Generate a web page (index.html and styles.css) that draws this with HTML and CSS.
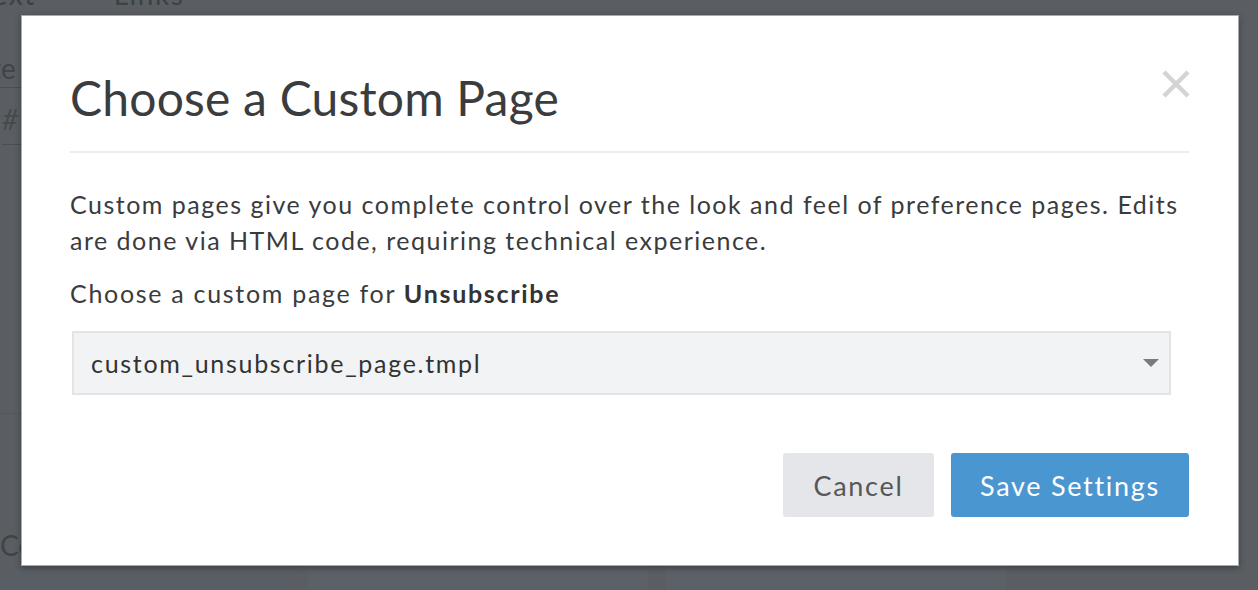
FILE: index.html
```html
<!DOCTYPE html>
<html>
<head>
<meta charset="utf-8">
<link rel="stylesheet" href="styles.css">
</head>
<body>
<div class="backdrop">
  <div class="bg-tabs"><span class="bg-tab">Text</span><span class="bg-tab">Links</span></div>
  <div class="bg-side">
    <div class="bg-row bg-row-te">te</div>
    <div class="bg-row bg-row-hash">#</div>
    <div class="bg-gap"></div>
    <div class="bg-row bg-row-co">Co</div>
  </div>
  <div class="bg-panels">
    <div class="bg-panel"></div>
    <div class="bg-panel"></div>
    <div class="bg-panel"></div>
  </div>
</div>

<div class="modal" role="dialog">
  <div class="modal-header">
    <h1 class="modal-title">Choose a Custom Page</h1>
    <button class="close" aria-label="Close">
      <svg width="30" height="30" viewBox="0 0 30 30"><path d="M3 3 L27 27 M27 3 L3 27" stroke="#d4d4d4" stroke-width="4.5" stroke-linecap="butt"/></svg>
    </button>
  </div>
  <div class="modal-body">
    <p class="intro">Custom pages give you complete control over the look and feel of preference pages. Edits are done via HTML code, requiring technical experience.</p>
    <p class="label">Choose a custom page for <strong>Unsubscribe</strong></p>
    <div class="select">
      <span class="select-value">custom_unsubscribe_page.tmpl</span>
      <span class="caret"></span>
    </div>
  </div>
  <div class="modal-footer">
    <button class="btn btn-cancel">Cancel</button>
    <button class="btn btn-primary">Save Settings</button>
  </div>
</div>
</body>
</html>
```

FILE: styles.css
```css
html, body {
  margin: 0;
  padding: 0;
  height: 100%;
}
body {
  background: #5a5e63;
  font-family: Lato, "Noto Sans", "Liberation Sans", sans-serif;
  overflow: hidden;
  position: relative;
}

/* faint page behind the overlay */
.backdrop {
  height: 590px;
  display: flex;
  flex-direction: column;
  color: #3b3e42;
}
.bg-tabs {
  display: flex;
  gap: 78px;
  margin-top: -21px;
  margin-left: -22px;
  font-size: 28px;
  letter-spacing: 1.5px;
  height: 31px;
  line-height: 31px;
  color: #3d4044;
}
.bg-side {
  width: 21px;
  display: flex;
  flex-direction: column;
  font-size: 28px;
  overflow: hidden;
  white-space: nowrap;
  flex: 1;
}
.bg-row {
  height: 56px;
  line-height: 56px;
  border-bottom: 1px solid #4b4e52;
  flex: none;
}
.bg-row-te { margin-top: 21px; margin-left: -9px; line-height: 74px; color: #404347; }
.bg-row-hash { font-style: italic; color: #45484c; line-height: 62px; margin-left: 2px; }
.bg-gap { height: 268px; border-bottom: 1px solid #53565a; flex: none; }
.bg-row-co { border: none; margin-top: 103px; color: #404346; }
.bg-panels {
  display: flex;
  gap: 18px;
  height: 24px;
  flex: none;
}
.bg-panel {
  width: 290px;
  background: #595e65;
}
.bg-panel + .bg-panel { width: 340px; background: #5c6067; }

/* modal */
.modal {
  position: absolute;
  left: 21px;
  top: 15px;
  width: 1218px;
  height: 551px;
  box-sizing: border-box;
  background: #fff;
  border: 1px solid #a8abae;
  box-shadow: 0 2px 6px rgba(0,0,0,0.35);
  padding: 0 49px 0 48px;
  color: #3a3b3d;
}
.modal-header {
  height: 137px;
  border-bottom: 2px solid #ececec;
  display: flex;
  align-items: flex-start;
  justify-content: space-between;
  box-sizing: border-box;
}
.modal-title {
  margin: 58px 0 0 0;
  font-size: 48px;
  font-weight: 400;
  line-height: 48px;
  color: #3b3c3e;
  letter-spacing: 0.2px;
}
.close {
  margin: 53px -2px 0 0;
  padding: 0;
  border: none;
  background: none;
  width: 30px;
  height: 30px;
  display: block;
}
.modal-body {
  padding-top: 33px;
}
.intro {
  margin: 0;
  font-size: 25px;
  line-height: 36px;
  letter-spacing: 1.5px;
  color: #3a3b3d;
}
.label {
  margin: 20px 0 0 0;
  font-size: 25px;
  line-height: 30px;
  letter-spacing: 1.7px;
}
.label strong { font-weight: 700; color: #333; }
.select {
  margin: 23px 18px 0 2px;
  height: 64px;
  box-sizing: border-box;
  background: #f2f3f5;
  border: 2px solid #e3e4e6;
  display: flex;
  align-items: center;
  justify-content: space-between;
  padding: 0 10px 0 17px;
}
.select-value {
  font-size: 25px;
  letter-spacing: 1.7px;
  color: #333;
}
.caret {
  width: 0;
  height: 0;
  border-left: 8px solid transparent;
  border-right: 8px solid transparent;
  border-top: 8px solid #7a7b7d;
}
.modal-footer {
  display: flex;
  justify-content: flex-end;
  gap: 17px;
  margin-top: 58px;
}
.btn {
  height: 64px;
  border: none;
  border-radius: 3px;
  font-family: inherit;
  font-size: 27px;
  letter-spacing: 1.7px;
  padding: 0;
}
.btn-cancel {
  width: 151px;
  background: #e4e6e9;
  color: #555759;
}
.btn-primary {
  width: 238px;
  background: #4a96d0;
  color: #fff;
}
```
